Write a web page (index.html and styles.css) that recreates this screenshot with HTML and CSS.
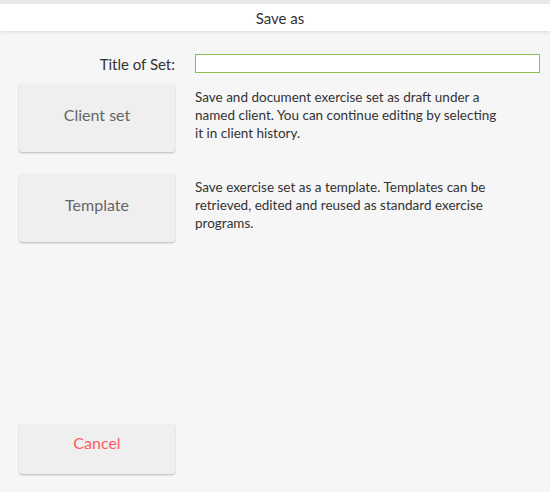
FILE: index.html
```html
<!DOCTYPE html>
<html>
<head>
<meta charset="utf-8">
<link rel="stylesheet" href="styles.css">
</head>
<body>
<div class="page">
  <div class="topshade"></div>
  <header class="header">Save as</header>
  <main class="content">
    <div class="row title-row">
      <label class="label" for="title">Title of Set:</label>
      <input class="input" id="title" type="text">
    </div>
    <div class="row option">
      <button class="btn">Client set</button>
      <p class="desc">Save and document exercise set as draft under a named client. You can continue editing by selecting it in client history.</p>
    </div>
    <div class="row option">
      <button class="btn">Template</button>
      <p class="desc">Save exercise set as a template. Templates can be retrieved, edited and reused as standard exercise programs.</p>
    </div>
    <div class="spacer"></div>
    <div class="row cancel-row">
      <button class="btn cancel">Cancel</button>
    </div>
  </main>
</div>
</body>
</html>
```

FILE: styles.css
```css
html, body {
  margin: 0;
  padding: 0;
  height: 100%;
  background: #f6f6f6;
}
body {
  font-family: "Lato", "Noto Sans", sans-serif;
  color: #333;
}
.page {
  display: flex;
  flex-direction: column;
  height: 492px;
}
.topshade {
  height: 4px;
  background: linear-gradient(#e6e6e6, #efefef);
}
.header {
  height: 27px;
  background: #fff;
  box-shadow: 0 1px 4px rgba(0,0,0,0.12);
  display: flex;
  align-items: center;
  justify-content: center;
  padding-left: 10px;
  font-size: 15px;
  color: #333;
  position: relative;
}
.content {
  flex: 1;
  display: flex;
  flex-direction: column;
  padding: 23px 10px 18px 19px;
}
.row {
  display: grid;
  grid-template-columns: 156px 1fr;
  column-gap: 20px;
}
.title-row {
  align-items: center;
}
.label {
  text-align: right;
  font-size: 15px;
  color: #333;
}
.input {
  height: 19px;
  box-sizing: border-box;
  border: 1px solid #8cc152;
  background: #fff;
  margin: 0;
  padding: 0 4px;
  outline: none;
}
.option {
  margin-top: 11px;
  align-items: start;
}
.option + .option {
  margin-top: 22px;
}
.btn {
  height: 68px;
  border: none;
  border-radius: 3px;
  background: #efefef;
  box-shadow: 0 1px 2px rgba(0,0,0,0.25);
  font-family: "Lato", "Noto Sans", sans-serif;
  font-size: 16px;
  color: #666;
  margin: 0;
  padding: 0 0 7px 0;
}
.desc {
  margin: 4px 0 0 0;
  max-width: 312px;
  font-size: 13.5px;
  line-height: 18px;
  color: #333;
}
.spacer {
  flex: 1;
}
.cancel {
  height: 50px;
  padding-bottom: 13px;
  color: #ff5a60;
}
```
